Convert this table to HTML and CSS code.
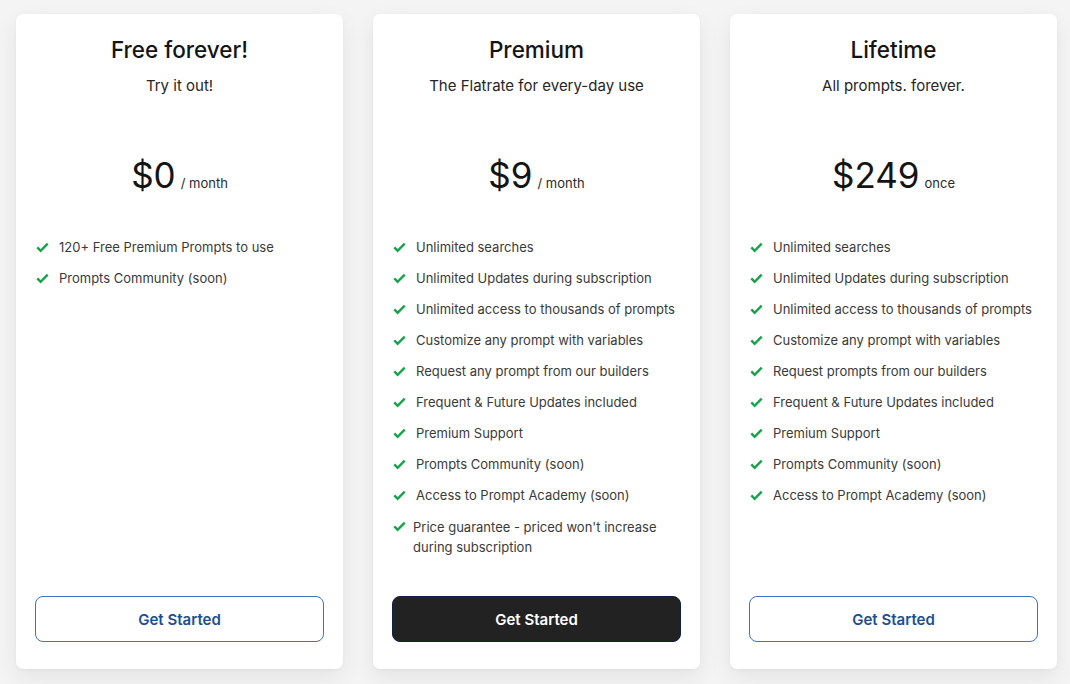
FILE: index.html
```html
<!DOCTYPE html>
<html lang="en">
<head>
<meta charset="utf-8">
<title>Pricing</title>
<link rel="stylesheet" href="styles.css">
</head>
<body>
<svg width="0" height="0" style="position:absolute">
  <defs>
    <symbol id="chk" viewBox="0 0 14 11">
      <path d="M1.4 5.4 L5 9 L12.6 1.4" fill="none" stroke="#16a34a" stroke-width="2.6" stroke-linejoin="miter" stroke-linecap="butt"/>
    </symbol>
  </defs>
</svg>
<main class="plans">
  <section class="card">
    <h2 class="title">Free forever!</h2>
    <p class="subtitle">Try it out!</p>
    <div class="price"><span class="amount">$0</span><span class="period">/ month</span></div>
    <ul class="features">
      <li><svg class="check"><use href="#chk"/></svg><span>120+ Free Premium Prompts to use</span></li>
      <li><svg class="check"><use href="#chk"/></svg><span>Prompts Community (soon)</span></li>
    </ul>
    <button class="btn">Get Started</button>
  </section>
  <section class="card">
    <h2 class="title">Premium</h2>
    <p class="subtitle">The Flatrate for every-day use</p>
    <div class="price"><span class="amount">$9</span><span class="period">/ month</span></div>
    <ul class="features">
      <li><svg class="check"><use href="#chk"/></svg><span>Unlimited searches</span></li>
      <li><svg class="check"><use href="#chk"/></svg><span>Unlimited Updates during subscription</span></li>
      <li><svg class="check"><use href="#chk"/></svg><span>Unlimited access to thousands of prompts</span></li>
      <li><svg class="check"><use href="#chk"/></svg><span>Customize any prompt with variables</span></li>
      <li><svg class="check"><use href="#chk"/></svg><span>Request any prompt from our builders</span></li>
      <li><svg class="check"><use href="#chk"/></svg><span>Frequent &amp; Future Updates included</span></li>
      <li><svg class="check"><use href="#chk"/></svg><span>Premium Support</span></li>
      <li><svg class="check"><use href="#chk"/></svg><span>Prompts Community (soon)</span></li>
      <li><svg class="check"><use href="#chk"/></svg><span>Access to Prompt Academy (soon)</span></li>
      <li class="wrap"><svg class="check"><use href="#chk"/></svg><span>Price guarantee - priced won't increase during subscription</span></li>
    </ul>
    <button class="btn btn-dark">Get Started</button>
  </section>
  <section class="card">
    <h2 class="title">Lifetime</h2>
    <p class="subtitle">All prompts. forever.</p>
    <div class="price"><span class="amount">$249</span><span class="period">once</span></div>
    <ul class="features">
      <li><svg class="check"><use href="#chk"/></svg><span>Unlimited searches</span></li>
      <li><svg class="check"><use href="#chk"/></svg><span>Unlimited Updates during subscription</span></li>
      <li><svg class="check"><use href="#chk"/></svg><span>Unlimited access to thousands of prompts</span></li>
      <li><svg class="check"><use href="#chk"/></svg><span>Customize any prompt with variables</span></li>
      <li><svg class="check"><use href="#chk"/></svg><span>Request prompts from our builders</span></li>
      <li><svg class="check"><use href="#chk"/></svg><span>Frequent &amp; Future Updates included</span></li>
      <li><svg class="check"><use href="#chk"/></svg><span>Premium Support</span></li>
      <li><svg class="check"><use href="#chk"/></svg><span>Prompts Community (soon)</span></li>
      <li><svg class="check"><use href="#chk"/></svg><span>Access to Prompt Academy (soon)</span></li>
    </ul>
    <button class="btn">Get Started</button>
  </section>
</main>
</body>
</html>
```
FILE: styles.css
```css
* { box-sizing: border-box; }
html, body { margin: 0; padding: 0; }
body {
  background: #f4f4f4;
  font-family: Inter, "Noto Sans", sans-serif;
  color: #1f1f1f;
  width: 1070px;
  height: 684px;
  overflow: hidden;
}
.plans {
  display: grid;
  grid-template-columns: repeat(3, 327px);
  column-gap: 30px;
  padding: 14px 0 0 16px;
}
.card {
  background: #fff;
  border-radius: 7px;
  height: 655px;
  box-shadow: 0 8px 22px rgba(0, 0, 0, 0.07), 0 1px 3px rgba(0, 0, 0, 0.04);
  display: flex;
  flex-direction: column;
  padding: 22px 19px 27px 19px;
}
.title {
  margin: 0;
  text-align: center;
  font-size: 22.5px;
  font-weight: 500;
  line-height: 28px;
  color: #141414;
}
.subtitle {
  margin: 13px 0 0;
  text-align: center;
  font-size: 15px;
  line-height: 18px;
  color: #262626;
}
.price {
  margin-top: 58px;
  display: flex;
  justify-content: center;
  align-items: baseline;
  gap: 5px;
}
.amount {
  font-size: 35px;
  line-height: 44px;
  color: #141414;
}
.period {
  font-size: 13px;
  color: #2a2a2a;
}
.features {
  list-style: none;
  margin: 42px 0 0;
  padding: 0 0 0 1px;
  display: flex;
  flex-direction: column;
  gap: 14px;
}
.features li {
  display: flex;
  align-items: center;
  gap: 10px;
  font-size: 13px;
  line-height: 17px;
  color: #3a3a3a;
}
.features li.wrap {
  align-items: flex-start;
  line-height: 20px;
  gap: 7px;
  margin-top: -1px;
}
.features li.wrap .check { margin-top: 4px; }
.check {
  width: 13px;
  height: 11px;
  flex: 0 0 13px;
}
.btn {
  margin-top: auto;
  height: 46px;
  width: 100%;
  border-radius: 8px;
  border: 1px solid #3d74bd;
  background: #fff;
  color: #1b4f93;
  font-family: Inter, "Noto Sans", sans-serif;
  font-size: 15px;
  font-weight: 600;
  cursor: pointer;
}
.btn-dark {
  background: #222222;
  border: 1.5px solid #0f1f4a;
  color: #fff;
}
```
